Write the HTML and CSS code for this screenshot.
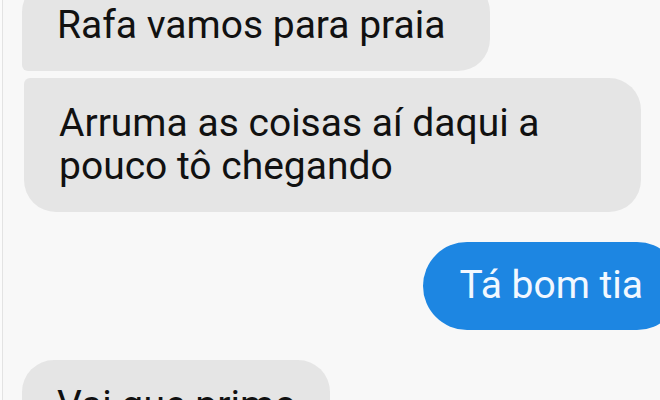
FILE: index.html
```html
<!DOCTYPE html>
<html lang="pt-BR">
<head>
    <meta charset="UTF-8">
    <meta name="viewport" content="width=device-width, initial-scale=1.0">
    <title>Conversa</title>
    <link rel="stylesheet" href="styles.css">
</head>
<body>
    <div class="screen">
        <div class="thread">
            <!-- received group -->
            <div class="msg in first roomy">Rafa vamos para praia</div>
            <div class="msg in last wide">Arruma as coisas aí daqui a pouco tô chegando</div>

            <!-- sent -->
            <div class="msg out">Tá bom tia</div>

            <div class="msg in first">Vai que primo</div>
        </div>
    </div>
</body>
</html>
```

FILE: styles.css
```css
/* Reset */
* {
    margin: 0;
    padding: 0;
    box-sizing: border-box;
}

html,
body {
    height: 100%;
    overflow: hidden;
}

body {
    background-color: #fbfbfb;
    font-family: Roboto, "Noto Sans", Arial, sans-serif;
    color: #111;
}

.screen {
    display: flow-root;
    height: 100%;
    margin-left: 2px;
    border-left: 1px solid #e3e3e3;
    background-color: #f8f8f8;
}

/* Thread */
.thread {
    display: flex;
    flex-direction: column;
    align-items: flex-start;
    margin-top: -20px;
    padding-left: 19px;
}

.msg {
    font-size: 39px;
    line-height: 43px;
    padding: 24px 34px 24px 35px;
    border-radius: 32px;
}

.msg.roomy {
    padding-right: 45px;
}

.msg.in {
    background-color: #e5e5e5;
}

.msg.in.first {
    border-bottom-left-radius: 6px;
}

.msg.in.last {
    border-top-left-radius: 6px;
    margin-top: 7px;
}

.msg.wide {
    max-width: 617px;
    margin-left: 2px;
}

.msg.out {
    align-self: flex-end;
    margin: 30px -21px 30px 0;
    padding: 22px 38px 23px 37px;
    border-radius: 44px;
    background-color: #1d86e2;
    color: #f2f8ff;
}
```
